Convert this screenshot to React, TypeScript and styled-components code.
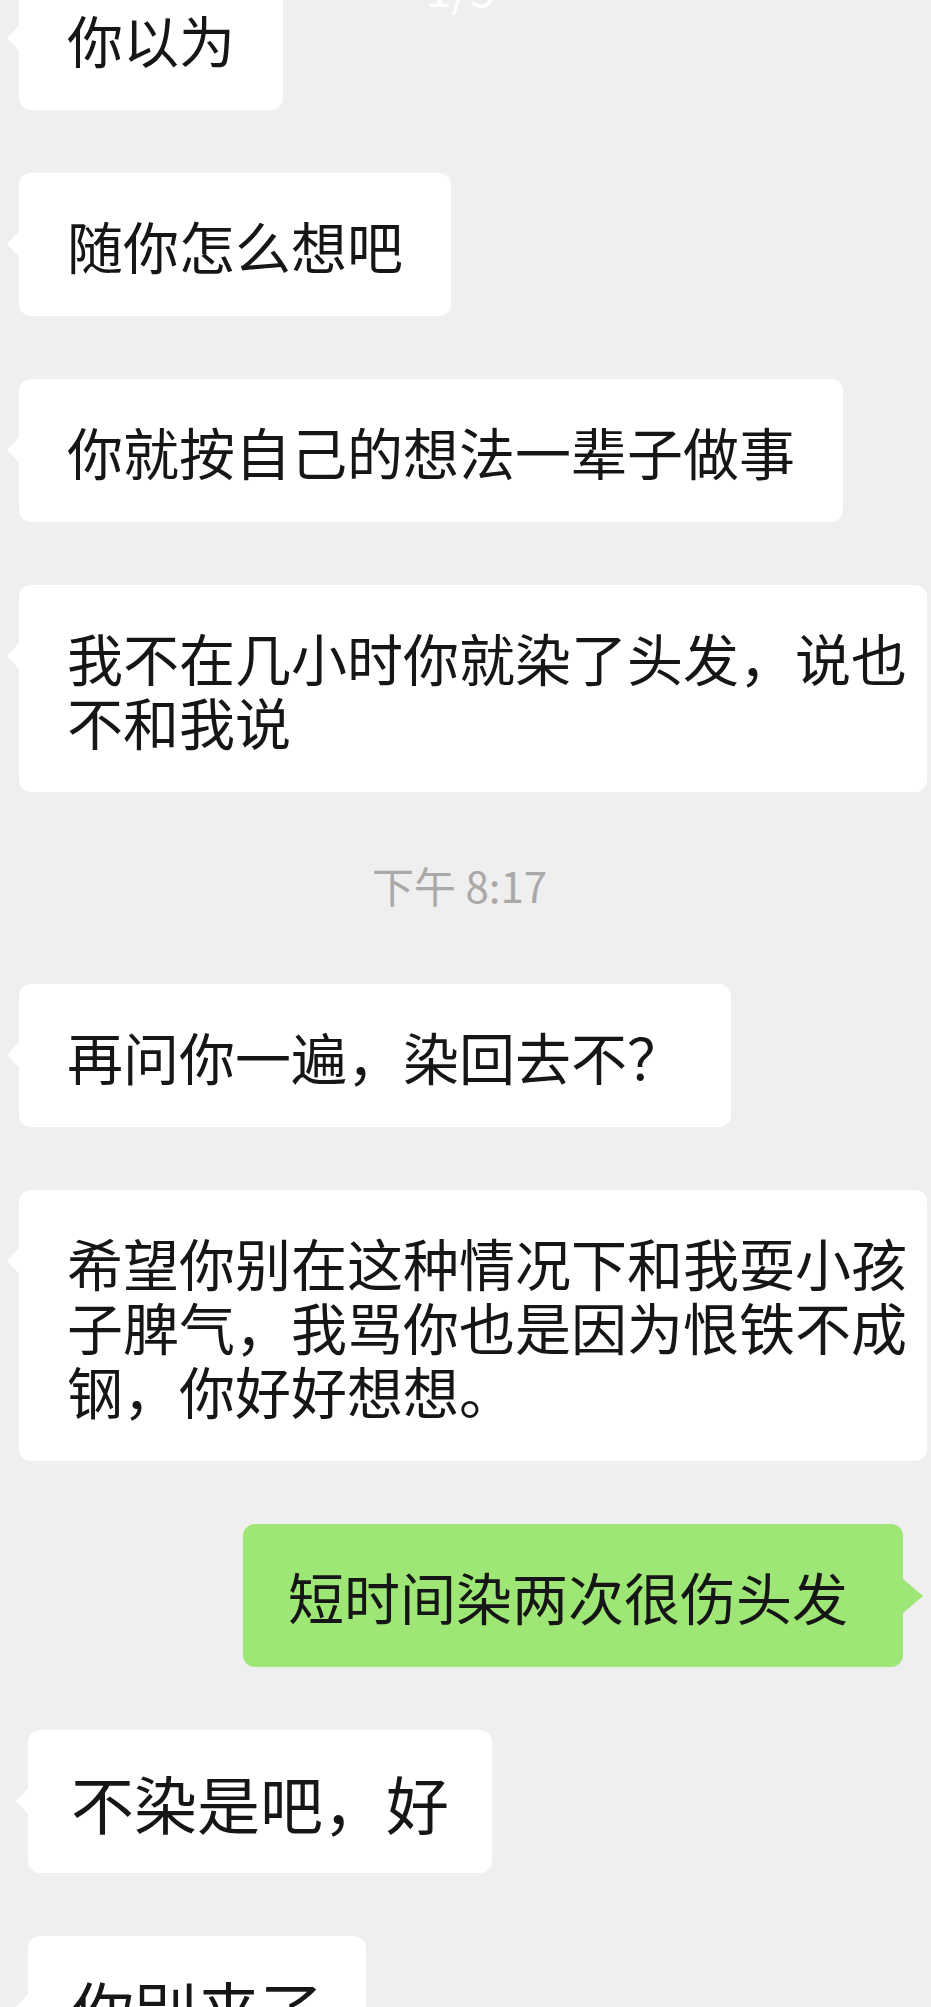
import React from "react";
import styled, { createGlobalStyle, css } from "styled-components";

const GlobalStyle = createGlobalStyle`
  html, body {
    margin: 0;
    padding: 0;
    background: #efefef;
    overflow: hidden;
  }
  body {
    font-family: "Noto Sans CJK SC", "Noto Sans", sans-serif;
  }
`;

const Screen = styled.div`
  position: relative;
  width: 931px;
  height: 2007px;
  overflow: hidden;
  background: #efefef;
`;

const PageIndicator = styled.div`
  position: absolute;
  top: -38px;
  left: 0;
  right: 0;
  text-align: center;
  padding-right: 10px;
  font-size: 46px;
  line-height: 50px;
  color: #ffffff;
  z-index: 2;
`;

const Thread = styled.div`
  display: flex;
  flex-direction: column;
  gap: 63px;
  margin-top: -33px;
`;

const Row = styled.div<{ $side: "left" | "right"; $inset?: number }>`
  display: flex;
  justify-content: ${(p) => (p.$side === "left" ? "flex-start" : "flex-end")};
  ${(p) =>
    p.$side === "left"
      ? css`
          padding-left: ${p.$inset ?? 19}px;
        `
      : css`
          padding-right: ${p.$inset ?? 28}px;
        `}
`;

const Bubble = styled.div<{
  $mine?: boolean;
  $wide?: boolean;
  $big?: boolean;
}>`
  position: relative;
  box-sizing: border-box;
  background: ${(p) => (p.$mine ? "#9ee675" : "#ffffff")};
  color: #161616;
  border-radius: 12px;
  font-size: ${(p) => (p.$big ? 63 : 56)}px;
  line-height: 64px;
  padding: 39.5px ${(p) => (p.$wide ? 16 : p.$big ? 43 : 48)}px 39.5px
    ${(p) => (p.$big ? 43 : p.$mine ? 45 : 48)}px;
  ${(p) =>
    p.$mine &&
    css`
      padding-right: 55px;
    `}
  ${(p) =>
    p.$wide &&
    css`
      width: 908px;
    `}
  white-space: nowrap;

  &::before {
    content: "";
    position: absolute;
    top: ${(p) => (p.$mine ? 54 : 57)}px;
    ${(p) =>
      p.$mine
        ? css`
            right: -20px;
            border-top: 18px solid transparent;
            border-bottom: 18px solid transparent;
            border-left: 21px solid #9ee675;
          `
        : css`
            left: -12px;
            border-top: 14px solid transparent;
            border-bottom: 14px solid transparent;
            border-right: 13px solid #ffffff;
          `}
  }
`;

const TimeStamp = styled.div`
  height: 66px;
  box-sizing: border-box;
  padding: 0 12px 8px 0;
  display: flex;
  align-items: center;
  justify-content: center;
  font-size: 42px;
  color: #a9a9a9;
`;

type Msg =
  | { kind: "in"; lines: string[]; wide?: boolean; big?: boolean; inset?: number }
  | { kind: "out"; lines: string[] }
  | { kind: "time"; text: string };

const messages: Msg[] = [
  { kind: "in", lines: ["你以为"] },
  { kind: "in", lines: ["随你怎么想吧"] },
  { kind: "in", lines: ["你就按自己的想法一辈子做事"] },
  {
    kind: "in",
    lines: ["我不在几小时你就染了头发，说也", "不和我说"],
    wide: true,
  },
  { kind: "time", text: "下午 8:17" },
  { kind: "in", lines: ["再问你一遍，染回去不？"] },
  {
    kind: "in",
    lines: [
      "希望你别在这种情况下和我耍小孩",
      "子脾气，我骂你也是因为恨铁不成",
      "钢，你好好想想。",
    ],
    wide: true,
  },
  { kind: "out", lines: ["短时间染两次很伤头发"] },
  { kind: "in", lines: ["不染是吧，好"], big: true, inset: 28 },
  { kind: "in", lines: ["你别来了"], big: true, inset: 28 },
];

const renderLines = (lines: string[]) =>
  lines.map((l, i) => (
    <React.Fragment key={i}>
      {i > 0 && <br />}
      {l}
    </React.Fragment>
  ));

export default function App() {
  return (
    <>
      <GlobalStyle />
      <Screen>
        <PageIndicator>1/3</PageIndicator>
        <Thread>
          {messages.map((m, i) => {
            if (m.kind === "time") {
              return <TimeStamp key={i}>{m.text}</TimeStamp>;
            }
            if (m.kind === "out") {
              return (
                <Row key={i} $side="right">
                  <Bubble $mine>{renderLines(m.lines)}</Bubble>
                </Row>
              );
            }
            return (
              <Row key={i} $side="left" $inset={m.inset}>
                <Bubble $wide={m.wide} $big={m.big}>
                  {renderLines(m.lines)}
                </Bubble>
              </Row>
            );
          })}
        </Thread>
      </Screen>
    </>
  );
}
